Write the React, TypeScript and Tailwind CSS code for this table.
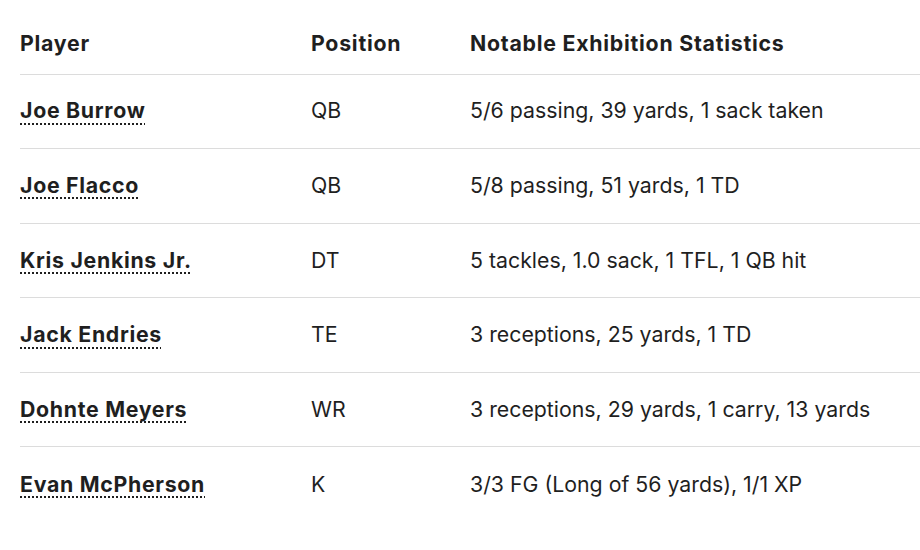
import React from 'react';

const rows = [
  { name: 'Joe Burrow', pos: 'QB', stats: '5/6 passing, 39 yards, 1 sack taken' },
  { name: 'Joe Flacco', pos: 'QB', stats: '5/8 passing, 51 yards, 1 TD' },
  { name: 'Kris Jenkins Jr.', pos: 'DT', stats: '5 tackles, 1.0 sack, 1 TFL, 1 QB hit' },
  { name: 'Jack Endries', pos: 'TE', stats: '3 receptions, 25 yards, 1 TD' },
  { name: 'Dohnte Meyers', pos: 'WR', stats: '3 receptions, 29 yards, 1 carry, 13 yards' },
  { name: 'Evan McPherson', pos: 'K', stats: '3/3 FG (Long of 56 yards), 1/1 XP' },
];

export default function App() {
  return (
    <div className="h-[550px] w-[920px] overflow-hidden bg-white text-[#1f1f1f] font-['Inter','Roboto',sans-serif]">
      <div className="pl-5 pt-[15px]">
        <table className="w-[920px] table-fixed border-collapse text-left text-[21.3px]">
          <colgroup>
            <col className="w-[291px]" />
            <col className="w-[159px]" />
            <col />
          </colgroup>
          <thead>
            <tr className="border-b border-[#dcdcdc]">
              <th className="h-[59px] pb-[1px] align-middle font-bold tracking-[0.75px]">Player</th>
              <th className="h-[59px] pb-[1px] align-middle font-bold tracking-[0.75px]">Position</th>
              <th className="h-[59px] pb-[1px] align-middle font-bold tracking-[0.75px]">Notable Exhibition Statistics</th>
            </tr>
          </thead>
          <tbody>
            {rows.map((r, i) => (
              <tr key={r.name} className={i < rows.length - 1 ? 'border-b border-[#dcdcdc]' : ''}>
                <td className="h-[74.6px] align-middle font-bold tracking-[0.7px]">
                  <span className="underline decoration-dotted decoration-[2px] underline-offset-[5px]">{r.name}</span>
                </td>
                <td className="h-[74.6px] align-middle">{r.pos}</td>
                <td className="h-[74.6px] align-middle">{r.stats}</td>
              </tr>
            ))}
          </tbody>
        </table>
      </div>
    </div>
  );
}
